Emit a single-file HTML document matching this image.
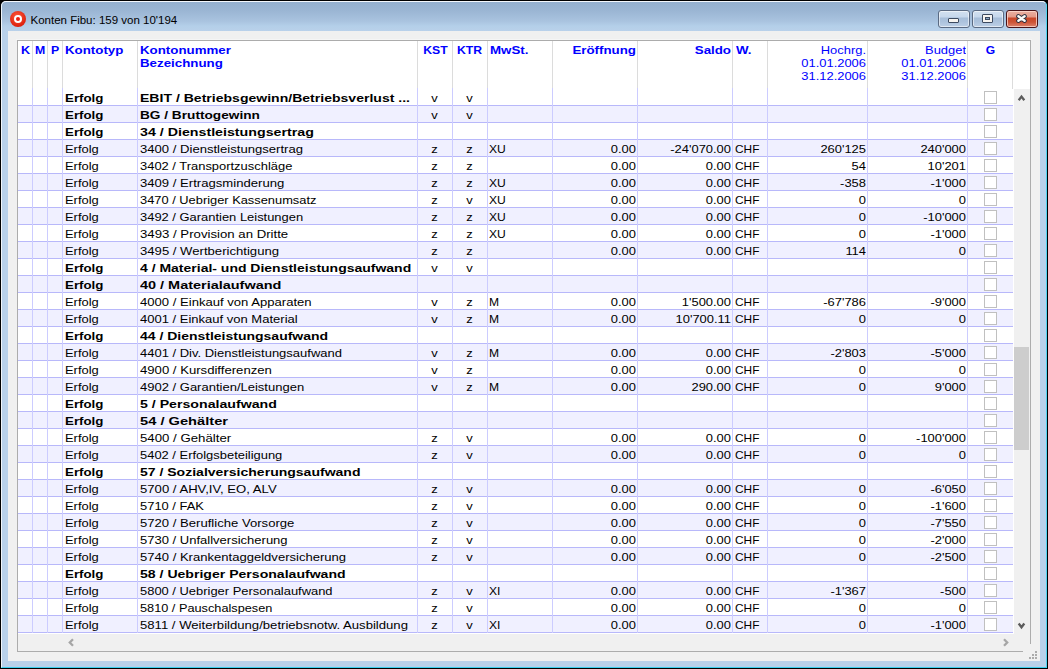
<!DOCTYPE html>
<html><head><meta charset="utf-8"><style>
*{margin:0;padding:0;box-sizing:border-box}
html,body{width:1048px;height:669px;overflow:hidden;background:#000}
body{position:relative;font-family:"Liberation Sans",sans-serif;font-size:11px;color:#000}
.abs{position:absolute}
#frame{position:absolute;left:0;top:0;width:1048px;height:669px;background:#000}
#fin{position:absolute;left:1px;top:1px;width:1046px;height:667px;border-radius:5px 5px 0 0;
 background:linear-gradient(#94b0cf 0px,#9bb6d4 10px,#a9c3df 20px,#b4cfe9 25px,#b9d1ea 30px,#b9d1ea 100%);}
#hl{position:absolute;left:1px;top:1px;width:1046px;height:667px;border-radius:5px 5px 0 0;border-top:1px solid #f4f8fc;border-left:1px solid #f0f5fa;border-right:1px solid #52d4f0;border-bottom:1px solid #3ccfee}
#client{position:absolute;left:8px;top:31px;width:1032px;height:630px;background:#f0f0f0}
.t{position:absolute;white-space:nowrap;line-height:13px;height:13px;transform:scaleX(1.175);transform-origin:0 0}
.b{font-weight:bold;transform:scaleX(1.21)}
.h{color:#0000ff}
.r{text-align:right;transform-origin:100% 0}
.c{text-align:center;transform-origin:50% 0}
.vl{position:absolute;width:1px}
.hl{position:absolute;height:1px}
.cb{position:absolute;width:13px;height:13px;border:1px solid #c0c0c0;background:#fff}
</style></head><body>
<div id="fin"></div><div id="hl"></div>
<div id="client"></div>

<svg class="abs" style="left:9px;top:10px" width="18" height="18" viewBox="0 0 18 18"><defs><radialGradient id="rg" cx="0.45" cy="0.35" r="0.7"><stop offset="0" stop-color="#ff5a3a"/><stop offset="1" stop-color="#d81808"/></radialGradient></defs><circle cx="9" cy="9" r="8" fill="url(#rg)"/><circle cx="9" cy="9" r="4" fill="#fff"/><circle cx="9" cy="9" r="2" fill="#e82010"/></svg>
<div class="abs" style="left:30.5px;top:13px;font-size:11.5px;line-height:14px;color:#000;white-space:nowrap;transform:scaleX(1.0);transform-origin:0 0">Konten Fibu: 159 von 10'194</div>
<div class="abs" style="left:938px;top:10px;width:32px;height:18px;border:1px solid #5a6a82;border-radius:3px;background:linear-gradient(#d2e0ef 0px,#c6d8ec 6px,#a7bed9 7px,#adc3dd 11px,#bdd0e6 16px);box-shadow:inset 0 0 0 1px rgba(255,255,255,0.55)"><div class="abs" style="left:9px;top:7px;width:11px;height:5px;background:#f6f4f0;border:1px solid #3c4a60;border-radius:1px"></div></div>
<div class="abs" style="left:972px;top:10px;width:32px;height:18px;border:1px solid #5a6a82;border-radius:3px;background:linear-gradient(#d2e0ef 0px,#c6d8ec 6px,#a7bed9 7px,#adc3dd 11px,#bdd0e6 16px);box-shadow:inset 0 0 0 1px rgba(255,255,255,0.55)"><div class="abs" style="left:9px;top:3px;width:11px;height:9px;background:#f6f4f0;border:1px solid #3c4a60;border-radius:1px"><div class="abs" style="left:2px;top:2px;width:5px;height:3px;background:#8aa6c4;border:1px solid #3c4a60"></div></div></div>
<div class="abs" style="left:1006px;top:10px;width:32px;height:18px;border:1px solid #4a1418;border-radius:3px;background:linear-gradient(#eab0a2 0px,#e49a88 6px,#c9482a 7px,#cc5234 11px,#dc8470 16px);box-shadow:inset 0 0 0 1px rgba(255,220,210,0.75)"><svg class="abs" style="left:8px;top:2px" width="13" height="11" viewBox="-1 -1 13 11"><path d="M2.4 2.3 L8.6 6.7 M8.6 2.3 L2.4 6.7" stroke="#2c3040" stroke-width="4.4" stroke-linecap="round"/><path d="M2.4 2.3 L8.6 6.7 M8.6 2.3 L2.4 6.7" stroke="#fbfaf6" stroke-width="2.5" stroke-linecap="round"/></svg></div>
<div class="abs" style="left:17px;top:40px;width:1014px;height:612px;border:1px solid #acacac;background:#f0f0f0"></div>
<div class="abs" style="left:16px;top:39px;width:1016px;height:1px;background:#f5f5f5"></div>
<div class="abs" style="left:18px;top:41px;width:1012px;height:48px;background:#fff"></div>
<div class="abs" style="left:18px;top:89px;width:995px;height:16px;background:#fff"></div>
<div class="hl" style="left:18px;top:105px;width:995px;background:#b8b8fa"></div>
<div class="abs" style="left:18px;top:106px;width:995px;height:16px;background:#f0f0ff"></div>
<div class="hl" style="left:18px;top:122px;width:995px;background:#b8b8fa"></div>
<div class="abs" style="left:18px;top:123px;width:995px;height:16px;background:#fff"></div>
<div class="hl" style="left:18px;top:139px;width:995px;background:#b8b8fa"></div>
<div class="abs" style="left:18px;top:140px;width:995px;height:16px;background:#f0f0ff"></div>
<div class="hl" style="left:18px;top:156px;width:995px;background:#b8b8fa"></div>
<div class="abs" style="left:18px;top:157px;width:995px;height:16px;background:#fff"></div>
<div class="hl" style="left:18px;top:173px;width:995px;background:#b8b8fa"></div>
<div class="abs" style="left:18px;top:174px;width:995px;height:16px;background:#f0f0ff"></div>
<div class="hl" style="left:18px;top:190px;width:995px;background:#b8b8fa"></div>
<div class="abs" style="left:18px;top:191px;width:995px;height:16px;background:#fff"></div>
<div class="hl" style="left:18px;top:207px;width:995px;background:#b8b8fa"></div>
<div class="abs" style="left:18px;top:208px;width:995px;height:16px;background:#f0f0ff"></div>
<div class="hl" style="left:18px;top:224px;width:995px;background:#b8b8fa"></div>
<div class="abs" style="left:18px;top:225px;width:995px;height:16px;background:#fff"></div>
<div class="hl" style="left:18px;top:241px;width:995px;background:#b8b8fa"></div>
<div class="abs" style="left:18px;top:242px;width:995px;height:16px;background:#f0f0ff"></div>
<div class="hl" style="left:18px;top:258px;width:995px;background:#b8b8fa"></div>
<div class="abs" style="left:18px;top:259px;width:995px;height:16px;background:#fff"></div>
<div class="hl" style="left:18px;top:275px;width:995px;background:#b8b8fa"></div>
<div class="abs" style="left:18px;top:276px;width:995px;height:16px;background:#f0f0ff"></div>
<div class="hl" style="left:18px;top:292px;width:995px;background:#b8b8fa"></div>
<div class="abs" style="left:18px;top:293px;width:995px;height:16px;background:#fff"></div>
<div class="hl" style="left:18px;top:309px;width:995px;background:#b8b8fa"></div>
<div class="abs" style="left:18px;top:310px;width:995px;height:16px;background:#f0f0ff"></div>
<div class="hl" style="left:18px;top:326px;width:995px;background:#b8b8fa"></div>
<div class="abs" style="left:18px;top:327px;width:995px;height:16px;background:#fff"></div>
<div class="hl" style="left:18px;top:343px;width:995px;background:#b8b8fa"></div>
<div class="abs" style="left:18px;top:344px;width:995px;height:16px;background:#f0f0ff"></div>
<div class="hl" style="left:18px;top:360px;width:995px;background:#b8b8fa"></div>
<div class="abs" style="left:18px;top:361px;width:995px;height:16px;background:#fff"></div>
<div class="hl" style="left:18px;top:377px;width:995px;background:#b8b8fa"></div>
<div class="abs" style="left:18px;top:378px;width:995px;height:16px;background:#f0f0ff"></div>
<div class="hl" style="left:18px;top:394px;width:995px;background:#b8b8fa"></div>
<div class="abs" style="left:18px;top:395px;width:995px;height:16px;background:#fff"></div>
<div class="hl" style="left:18px;top:411px;width:995px;background:#b8b8fa"></div>
<div class="abs" style="left:18px;top:412px;width:995px;height:16px;background:#f0f0ff"></div>
<div class="hl" style="left:18px;top:428px;width:995px;background:#b8b8fa"></div>
<div class="abs" style="left:18px;top:429px;width:995px;height:16px;background:#fff"></div>
<div class="hl" style="left:18px;top:445px;width:995px;background:#b8b8fa"></div>
<div class="abs" style="left:18px;top:446px;width:995px;height:16px;background:#f0f0ff"></div>
<div class="hl" style="left:18px;top:462px;width:995px;background:#b8b8fa"></div>
<div class="abs" style="left:18px;top:463px;width:995px;height:16px;background:#fff"></div>
<div class="hl" style="left:18px;top:479px;width:995px;background:#b8b8fa"></div>
<div class="abs" style="left:18px;top:480px;width:995px;height:16px;background:#f0f0ff"></div>
<div class="hl" style="left:18px;top:496px;width:995px;background:#b8b8fa"></div>
<div class="abs" style="left:18px;top:497px;width:995px;height:16px;background:#fff"></div>
<div class="hl" style="left:18px;top:513px;width:995px;background:#b8b8fa"></div>
<div class="abs" style="left:18px;top:514px;width:995px;height:16px;background:#f0f0ff"></div>
<div class="hl" style="left:18px;top:530px;width:995px;background:#b8b8fa"></div>
<div class="abs" style="left:18px;top:531px;width:995px;height:16px;background:#fff"></div>
<div class="hl" style="left:18px;top:547px;width:995px;background:#b8b8fa"></div>
<div class="abs" style="left:18px;top:548px;width:995px;height:16px;background:#f0f0ff"></div>
<div class="hl" style="left:18px;top:564px;width:995px;background:#b8b8fa"></div>
<div class="abs" style="left:18px;top:565px;width:995px;height:16px;background:#fff"></div>
<div class="hl" style="left:18px;top:581px;width:995px;background:#b8b8fa"></div>
<div class="abs" style="left:18px;top:582px;width:995px;height:16px;background:#f0f0ff"></div>
<div class="hl" style="left:18px;top:598px;width:995px;background:#b8b8fa"></div>
<div class="abs" style="left:18px;top:599px;width:995px;height:16px;background:#fff"></div>
<div class="hl" style="left:18px;top:615px;width:995px;background:#b8b8fa"></div>
<div class="abs" style="left:18px;top:616px;width:995px;height:16px;background:#f0f0ff"></div>
<div class="hl" style="left:18px;top:632px;width:995px;background:#b8b8fa"></div>
<div class="abs" style="left:18px;top:633px;width:996px;height:1px;background:#fff"></div>
<div class="abs" style="left:1013px;top:89px;width:1px;height:545px;background:#fff"></div>
<div class="vl" style="left:32px;top:41px;height:47px;background:#dcdcdc"></div>
<div class="vl" style="left:32px;top:88px;height:545px;background:#ccccff"></div>
<div class="vl" style="left:47px;top:41px;height:47px;background:#dcdcdc"></div>
<div class="vl" style="left:47px;top:88px;height:545px;background:#ccccff"></div>
<div class="vl" style="left:62px;top:41px;height:47px;background:#dcdcdc"></div>
<div class="vl" style="left:62px;top:88px;height:545px;background:#ccccff"></div>
<div class="vl" style="left:137px;top:41px;height:47px;background:#dcdcdc"></div>
<div class="vl" style="left:137px;top:88px;height:545px;background:#ccccff"></div>
<div class="vl" style="left:417px;top:41px;height:47px;background:#dcdcdc"></div>
<div class="vl" style="left:417px;top:88px;height:545px;background:#ccccff"></div>
<div class="vl" style="left:452px;top:41px;height:47px;background:#dcdcdc"></div>
<div class="vl" style="left:452px;top:88px;height:545px;background:#ccccff"></div>
<div class="vl" style="left:487px;top:41px;height:47px;background:#dcdcdc"></div>
<div class="vl" style="left:487px;top:88px;height:545px;background:#ccccff"></div>
<div class="vl" style="left:552px;top:41px;height:47px;background:#dcdcdc"></div>
<div class="vl" style="left:552px;top:88px;height:545px;background:#ccccff"></div>
<div class="vl" style="left:637px;top:41px;height:47px;background:#dcdcdc"></div>
<div class="vl" style="left:637px;top:88px;height:545px;background:#ccccff"></div>
<div class="vl" style="left:732px;top:41px;height:47px;background:#dcdcdc"></div>
<div class="vl" style="left:732px;top:88px;height:545px;background:#ccccff"></div>
<div class="vl" style="left:767px;top:41px;height:47px;background:#dcdcdc"></div>
<div class="vl" style="left:767px;top:88px;height:545px;background:#ccccff"></div>
<div class="vl" style="left:867px;top:41px;height:47px;background:#dcdcdc"></div>
<div class="vl" style="left:867px;top:88px;height:545px;background:#ccccff"></div>
<div class="vl" style="left:967px;top:41px;height:47px;background:#dcdcdc"></div>
<div class="vl" style="left:967px;top:88px;height:545px;background:#ccccff"></div>
<div class="vl" style="left:1012px;top:41px;height:48px;background:#dcdcdc"></div>
<div class="t b h" style="left:21px;top:44px;transform:scaleX(1.15)">K</div>
<div class="t b h" style="left:35px;top:44px;transform:scaleX(1.12)">M</div>
<div class="t b h" style="left:51px;top:44px;transform:scaleX(1.12)">P</div>
<div class="t b h" style="left:65px;top:44px;">Kontotyp</div>
<div class="t b h" style="left:140px;top:44px;">Kontonummer</div>
<div class="t b h" style="left:140px;top:57px;">Bezeichnung</div>
<div class="t b h c" style="left:418px;width:35px;top:44px;transform:scaleX(1.11);">KST</div>
<div class="t b h c" style="left:452px;width:35px;top:44px;transform:scaleX(1.11);">KTR</div>
<div class="t b h" style="left:490px;top:44px;">MwSt.</div>
<div class="t b h r" style="left:552px;width:84px;top:44px;">Eröffnung</div>
<div class="t b h r" style="left:637px;width:94px;top:44px;">Saldo</div>
<div class="t b h" style="left:736px;top:44px;">W.</div>
<div class="t h r" style="left:767px;width:99px;top:44px;">Hochrg.</div>
<div class="t h r" style="left:767px;width:99px;top:57px;">01.01.2006</div>
<div class="t h r" style="left:767px;width:99px;top:70px;">31.12.2006</div>
<div class="t h r" style="left:867px;width:99px;top:44px;">Budget</div>
<div class="t h r" style="left:867px;width:99px;top:57px;">01.01.2006</div>
<div class="t h r" style="left:867px;width:99px;top:70px;">31.12.2006</div>
<div class="t b h c" style="left:968px;width:45px;top:44px;transform:scaleX(1.1);">G</div>
<div class="t b" style="left:65px;top:92px;">Erfolg</div>
<div class="t b" style="left:140px;top:92px;transform:scaleX(1.2767);">EBIT / Betriebsgewinn/Betriebsverlust ...</div>
<div class="t  c" style="left:417px;width:35px;top:92px;">v</div>
<div class="t  c" style="left:452px;width:35px;top:92px;">v</div>
<div class="cb" style="left:984px;top:91px"></div>
<div class="t b" style="left:65px;top:109px;">Erfolg</div>
<div class="t b" style="left:140px;top:109px;transform:scaleX(1.2416);">BG / Bruttogewinn</div>
<div class="t  c" style="left:417px;width:35px;top:109px;">v</div>
<div class="t  c" style="left:452px;width:35px;top:109px;">v</div>
<div class="cb" style="left:984px;top:108px"></div>
<div class="t b" style="left:65px;top:126px;">Erfolg</div>
<div class="t b" style="left:140px;top:126px;transform:scaleX(1.2927);">34 / Dienstleistungsertrag</div>
<div class="cb" style="left:984px;top:125px"></div>
<div class="t " style="left:65px;top:143px;">Erfolg</div>
<div class="t " style="left:140px;top:143px;transform:scaleX(1.1898);">3400 / Dienstleistungsertrag</div>
<div class="t  c" style="left:417px;width:35px;top:143px;">z</div>
<div class="t  c" style="left:452px;width:35px;top:143px;">z</div>
<div class="t " style="left:489px;top:143px;transform:scaleX(1.1);">XU</div>
<div class="t  r" style="left:552px;width:84px;top:143px;">0.00</div>
<div class="t  r" style="left:637px;width:94px;top:143px;">-24'070.00</div>
<div class="t " style="left:735px;top:143px;transform:scaleX(1.08);">CHF</div>
<div class="t  r" style="left:767px;width:99px;top:143px;">260'125</div>
<div class="t  r" style="left:867px;width:99px;top:143px;">240'000</div>
<div class="cb" style="left:984px;top:142px"></div>
<div class="t " style="left:65px;top:160px;">Erfolg</div>
<div class="t " style="left:140px;top:160px;transform:scaleX(1.1750);">3402 / Transportzuschläge</div>
<div class="t  c" style="left:417px;width:35px;top:160px;">z</div>
<div class="t  c" style="left:452px;width:35px;top:160px;">z</div>
<div class="t  r" style="left:552px;width:84px;top:160px;">0.00</div>
<div class="t  r" style="left:637px;width:94px;top:160px;">0.00</div>
<div class="t " style="left:735px;top:160px;transform:scaleX(1.08);">CHF</div>
<div class="t  r" style="left:767px;width:99px;top:160px;">54</div>
<div class="t  r" style="left:867px;width:99px;top:160px;">10'201</div>
<div class="cb" style="left:984px;top:159px"></div>
<div class="t " style="left:65px;top:177px;">Erfolg</div>
<div class="t " style="left:140px;top:177px;transform:scaleX(1.1918);">3409 / Ertragsminderung</div>
<div class="t  c" style="left:417px;width:35px;top:177px;">z</div>
<div class="t  c" style="left:452px;width:35px;top:177px;">z</div>
<div class="t " style="left:489px;top:177px;transform:scaleX(1.1);">XU</div>
<div class="t  r" style="left:552px;width:84px;top:177px;">0.00</div>
<div class="t  r" style="left:637px;width:94px;top:177px;">0.00</div>
<div class="t " style="left:735px;top:177px;transform:scaleX(1.08);">CHF</div>
<div class="t  r" style="left:767px;width:99px;top:177px;">-358</div>
<div class="t  r" style="left:867px;width:99px;top:177px;">-1'000</div>
<div class="cb" style="left:984px;top:176px"></div>
<div class="t " style="left:65px;top:194px;">Erfolg</div>
<div class="t " style="left:140px;top:194px;transform:scaleX(1.1683);">3470 / Uebriger Kassenumsatz</div>
<div class="t  c" style="left:417px;width:35px;top:194px;">z</div>
<div class="t  c" style="left:452px;width:35px;top:194px;">v</div>
<div class="t " style="left:489px;top:194px;transform:scaleX(1.1);">XU</div>
<div class="t  r" style="left:552px;width:84px;top:194px;">0.00</div>
<div class="t  r" style="left:637px;width:94px;top:194px;">0.00</div>
<div class="t " style="left:735px;top:194px;transform:scaleX(1.08);">CHF</div>
<div class="t  r" style="left:767px;width:99px;top:194px;">0</div>
<div class="t  r" style="left:867px;width:99px;top:194px;">0</div>
<div class="cb" style="left:984px;top:193px"></div>
<div class="t " style="left:65px;top:211px;">Erfolg</div>
<div class="t " style="left:140px;top:211px;transform:scaleX(1.1750);">3492 / Garantien Leistungen</div>
<div class="t  c" style="left:417px;width:35px;top:211px;">z</div>
<div class="t  c" style="left:452px;width:35px;top:211px;">z</div>
<div class="t " style="left:489px;top:211px;transform:scaleX(1.1);">XU</div>
<div class="t  r" style="left:552px;width:84px;top:211px;">0.00</div>
<div class="t  r" style="left:637px;width:94px;top:211px;">0.00</div>
<div class="t " style="left:735px;top:211px;transform:scaleX(1.08);">CHF</div>
<div class="t  r" style="left:767px;width:99px;top:211px;">0</div>
<div class="t  r" style="left:867px;width:99px;top:211px;">-10'000</div>
<div class="cb" style="left:984px;top:210px"></div>
<div class="t " style="left:65px;top:228px;">Erfolg</div>
<div class="t " style="left:140px;top:228px;transform:scaleX(1.1997);">3493 / Provision an Dritte</div>
<div class="t  c" style="left:417px;width:35px;top:228px;">z</div>
<div class="t  c" style="left:452px;width:35px;top:228px;">z</div>
<div class="t " style="left:489px;top:228px;transform:scaleX(1.1);">XU</div>
<div class="t  r" style="left:552px;width:84px;top:228px;">0.00</div>
<div class="t  r" style="left:637px;width:94px;top:228px;">0.00</div>
<div class="t " style="left:735px;top:228px;transform:scaleX(1.08);">CHF</div>
<div class="t  r" style="left:767px;width:99px;top:228px;">0</div>
<div class="t  r" style="left:867px;width:99px;top:228px;">-1'000</div>
<div class="cb" style="left:984px;top:227px"></div>
<div class="t " style="left:65px;top:245px;">Erfolg</div>
<div class="t " style="left:140px;top:245px;transform:scaleX(1.1924);">3495 / Wertberichtigung</div>
<div class="t  c" style="left:417px;width:35px;top:245px;">z</div>
<div class="t  c" style="left:452px;width:35px;top:245px;">z</div>
<div class="t  r" style="left:552px;width:84px;top:245px;">0.00</div>
<div class="t  r" style="left:637px;width:94px;top:245px;">0.00</div>
<div class="t " style="left:735px;top:245px;transform:scaleX(1.08);">CHF</div>
<div class="t  r" style="left:767px;width:99px;top:245px;">114</div>
<div class="t  r" style="left:867px;width:99px;top:245px;">0</div>
<div class="cb" style="left:984px;top:244px"></div>
<div class="t b" style="left:65px;top:262px;">Erfolg</div>
<div class="t b" style="left:140px;top:262px;transform:scaleX(1.2714);">4 / Material- und Dienstleistungsaufwand</div>
<div class="t  c" style="left:417px;width:35px;top:262px;">v</div>
<div class="t  c" style="left:452px;width:35px;top:262px;">v</div>
<div class="cb" style="left:984px;top:261px"></div>
<div class="t b" style="left:65px;top:279px;">Erfolg</div>
<div class="t b" style="left:140px;top:279px;transform:scaleX(1.3140);">40 / Materialaufwand</div>
<div class="cb" style="left:984px;top:278px"></div>
<div class="t " style="left:65px;top:296px;">Erfolg</div>
<div class="t " style="left:140px;top:296px;transform:scaleX(1.1890);">4000 / Einkauf von Apparaten</div>
<div class="t  c" style="left:417px;width:35px;top:296px;">v</div>
<div class="t  c" style="left:452px;width:35px;top:296px;">z</div>
<div class="t " style="left:489px;top:296px;transform:scaleX(1.1);">M</div>
<div class="t  r" style="left:552px;width:84px;top:296px;">0.00</div>
<div class="t  r" style="left:637px;width:94px;top:296px;">1'500.00</div>
<div class="t " style="left:735px;top:296px;transform:scaleX(1.08);">CHF</div>
<div class="t  r" style="left:767px;width:99px;top:296px;">-67'786</div>
<div class="t  r" style="left:867px;width:99px;top:296px;">-9'000</div>
<div class="cb" style="left:984px;top:295px"></div>
<div class="t " style="left:65px;top:313px;">Erfolg</div>
<div class="t " style="left:140px;top:313px;transform:scaleX(1.1826);">4001 / Einkauf von Material</div>
<div class="t  c" style="left:417px;width:35px;top:313px;">v</div>
<div class="t  c" style="left:452px;width:35px;top:313px;">z</div>
<div class="t " style="left:489px;top:313px;transform:scaleX(1.1);">M</div>
<div class="t  r" style="left:552px;width:84px;top:313px;">0.00</div>
<div class="t  r" style="left:637px;width:94px;top:313px;">10'700.11</div>
<div class="t " style="left:735px;top:313px;transform:scaleX(1.08);">CHF</div>
<div class="t  r" style="left:767px;width:99px;top:313px;">0</div>
<div class="t  r" style="left:867px;width:99px;top:313px;">0</div>
<div class="cb" style="left:984px;top:312px"></div>
<div class="t b" style="left:65px;top:330px;">Erfolg</div>
<div class="t b" style="left:140px;top:330px;transform:scaleX(1.2715);">44 / Dienstleistungsaufwand</div>
<div class="cb" style="left:984px;top:329px"></div>
<div class="t " style="left:65px;top:347px;">Erfolg</div>
<div class="t " style="left:140px;top:347px;transform:scaleX(1.1809);">4401 / Div. Dienstleistungsaufwand</div>
<div class="t  c" style="left:417px;width:35px;top:347px;">v</div>
<div class="t  c" style="left:452px;width:35px;top:347px;">z</div>
<div class="t " style="left:489px;top:347px;transform:scaleX(1.1);">M</div>
<div class="t  r" style="left:552px;width:84px;top:347px;">0.00</div>
<div class="t  r" style="left:637px;width:94px;top:347px;">0.00</div>
<div class="t " style="left:735px;top:347px;transform:scaleX(1.08);">CHF</div>
<div class="t  r" style="left:767px;width:99px;top:347px;">-2'803</div>
<div class="t  r" style="left:867px;width:99px;top:347px;">-5'000</div>
<div class="cb" style="left:984px;top:346px"></div>
<div class="t " style="left:65px;top:364px;">Erfolg</div>
<div class="t " style="left:140px;top:364px;transform:scaleX(1.1934);">4900 / Kursdifferenzen</div>
<div class="t  c" style="left:417px;width:35px;top:364px;">v</div>
<div class="t  c" style="left:452px;width:35px;top:364px;">z</div>
<div class="t  r" style="left:552px;width:84px;top:364px;">0.00</div>
<div class="t  r" style="left:637px;width:94px;top:364px;">0.00</div>
<div class="t " style="left:735px;top:364px;transform:scaleX(1.08);">CHF</div>
<div class="t  r" style="left:767px;width:99px;top:364px;">0</div>
<div class="t  r" style="left:867px;width:99px;top:364px;">0</div>
<div class="cb" style="left:984px;top:363px"></div>
<div class="t " style="left:65px;top:381px;">Erfolg</div>
<div class="t " style="left:140px;top:381px;transform:scaleX(1.1823);">4902 / Garantien/Leistungen</div>
<div class="t  c" style="left:417px;width:35px;top:381px;">v</div>
<div class="t  c" style="left:452px;width:35px;top:381px;">z</div>
<div class="t " style="left:489px;top:381px;transform:scaleX(1.1);">M</div>
<div class="t  r" style="left:552px;width:84px;top:381px;">0.00</div>
<div class="t  r" style="left:637px;width:94px;top:381px;">290.00</div>
<div class="t " style="left:735px;top:381px;transform:scaleX(1.08);">CHF</div>
<div class="t  r" style="left:767px;width:99px;top:381px;">0</div>
<div class="t  r" style="left:867px;width:99px;top:381px;">9'000</div>
<div class="cb" style="left:984px;top:380px"></div>
<div class="t b" style="left:65px;top:398px;">Erfolg</div>
<div class="t b" style="left:140px;top:398px;transform:scaleX(1.2862);">5 / Personalaufwand</div>
<div class="cb" style="left:984px;top:397px"></div>
<div class="t b" style="left:65px;top:415px;">Erfolg</div>
<div class="t b" style="left:140px;top:415px;transform:scaleX(1.3325);">54 / Gehälter</div>
<div class="cb" style="left:984px;top:414px"></div>
<div class="t " style="left:65px;top:432px;">Erfolg</div>
<div class="t " style="left:140px;top:432px;transform:scaleX(1.2022);">5400 / Gehälter</div>
<div class="t  c" style="left:417px;width:35px;top:432px;">z</div>
<div class="t  c" style="left:452px;width:35px;top:432px;">v</div>
<div class="t  r" style="left:552px;width:84px;top:432px;">0.00</div>
<div class="t  r" style="left:637px;width:94px;top:432px;">0.00</div>
<div class="t " style="left:735px;top:432px;transform:scaleX(1.08);">CHF</div>
<div class="t  r" style="left:767px;width:99px;top:432px;">0</div>
<div class="t  r" style="left:867px;width:99px;top:432px;">-100'000</div>
<div class="cb" style="left:984px;top:431px"></div>
<div class="t " style="left:65px;top:449px;">Erfolg</div>
<div class="t " style="left:140px;top:449px;transform:scaleX(1.1750);">5402 / Erfolgsbeteiligung</div>
<div class="t  c" style="left:417px;width:35px;top:449px;">z</div>
<div class="t  c" style="left:452px;width:35px;top:449px;">v</div>
<div class="t  r" style="left:552px;width:84px;top:449px;">0.00</div>
<div class="t  r" style="left:637px;width:94px;top:449px;">0.00</div>
<div class="t " style="left:735px;top:449px;transform:scaleX(1.08);">CHF</div>
<div class="t  r" style="left:767px;width:99px;top:449px;">0</div>
<div class="t  r" style="left:867px;width:99px;top:449px;">0</div>
<div class="cb" style="left:984px;top:448px"></div>
<div class="t b" style="left:65px;top:466px;">Erfolg</div>
<div class="t b" style="left:140px;top:466px;transform:scaleX(1.2743);">57 / Sozialversicherungsaufwand</div>
<div class="cb" style="left:984px;top:465px"></div>
<div class="t " style="left:65px;top:483px;">Erfolg</div>
<div class="t " style="left:140px;top:483px;transform:scaleX(1.1927);">5700 / AHV,IV, EO, ALV</div>
<div class="t  c" style="left:417px;width:35px;top:483px;">z</div>
<div class="t  c" style="left:452px;width:35px;top:483px;">v</div>
<div class="t  r" style="left:552px;width:84px;top:483px;">0.00</div>
<div class="t  r" style="left:637px;width:94px;top:483px;">0.00</div>
<div class="t " style="left:735px;top:483px;transform:scaleX(1.08);">CHF</div>
<div class="t  r" style="left:767px;width:99px;top:483px;">0</div>
<div class="t  r" style="left:867px;width:99px;top:483px;">-6'050</div>
<div class="cb" style="left:984px;top:482px"></div>
<div class="t " style="left:65px;top:500px;">Erfolg</div>
<div class="t " style="left:140px;top:500px;transform:scaleX(1.1750);">5710 / FAK</div>
<div class="t  c" style="left:417px;width:35px;top:500px;">z</div>
<div class="t  c" style="left:452px;width:35px;top:500px;">v</div>
<div class="t  r" style="left:552px;width:84px;top:500px;">0.00</div>
<div class="t  r" style="left:637px;width:94px;top:500px;">0.00</div>
<div class="t " style="left:735px;top:500px;transform:scaleX(1.08);">CHF</div>
<div class="t  r" style="left:767px;width:99px;top:500px;">0</div>
<div class="t  r" style="left:867px;width:99px;top:500px;">-1'600</div>
<div class="cb" style="left:984px;top:499px"></div>
<div class="t " style="left:65px;top:517px;">Erfolg</div>
<div class="t " style="left:140px;top:517px;transform:scaleX(1.1906);">5720 / Berufliche Vorsorge</div>
<div class="t  c" style="left:417px;width:35px;top:517px;">z</div>
<div class="t  c" style="left:452px;width:35px;top:517px;">v</div>
<div class="t  r" style="left:552px;width:84px;top:517px;">0.00</div>
<div class="t  r" style="left:637px;width:94px;top:517px;">0.00</div>
<div class="t " style="left:735px;top:517px;transform:scaleX(1.08);">CHF</div>
<div class="t  r" style="left:767px;width:99px;top:517px;">0</div>
<div class="t  r" style="left:867px;width:99px;top:517px;">-7'550</div>
<div class="cb" style="left:984px;top:516px"></div>
<div class="t " style="left:65px;top:534px;">Erfolg</div>
<div class="t " style="left:140px;top:534px;transform:scaleX(1.1832);">5730 / Unfallversicherung</div>
<div class="t  c" style="left:417px;width:35px;top:534px;">z</div>
<div class="t  c" style="left:452px;width:35px;top:534px;">v</div>
<div class="t  r" style="left:552px;width:84px;top:534px;">0.00</div>
<div class="t  r" style="left:637px;width:94px;top:534px;">0.00</div>
<div class="t " style="left:735px;top:534px;transform:scaleX(1.08);">CHF</div>
<div class="t  r" style="left:767px;width:99px;top:534px;">0</div>
<div class="t  r" style="left:867px;width:99px;top:534px;">-2'000</div>
<div class="cb" style="left:984px;top:533px"></div>
<div class="t " style="left:65px;top:551px;">Erfolg</div>
<div class="t " style="left:140px;top:551px;transform:scaleX(1.1866);">5740 / Krankentaggeldversicherung</div>
<div class="t  c" style="left:417px;width:35px;top:551px;">z</div>
<div class="t  c" style="left:452px;width:35px;top:551px;">v</div>
<div class="t  r" style="left:552px;width:84px;top:551px;">0.00</div>
<div class="t  r" style="left:637px;width:94px;top:551px;">0.00</div>
<div class="t " style="left:735px;top:551px;transform:scaleX(1.08);">CHF</div>
<div class="t  r" style="left:767px;width:99px;top:551px;">0</div>
<div class="t  r" style="left:867px;width:99px;top:551px;">-2'500</div>
<div class="cb" style="left:984px;top:550px"></div>
<div class="t b" style="left:65px;top:568px;">Erfolg</div>
<div class="t b" style="left:140px;top:568px;transform:scaleX(1.2790);">58 / Uebriger Personalaufwand</div>
<div class="cb" style="left:984px;top:567px"></div>
<div class="t " style="left:65px;top:585px;">Erfolg</div>
<div class="t " style="left:140px;top:585px;transform:scaleX(1.1750);">5800 / Uebriger Personalaufwand</div>
<div class="t  c" style="left:417px;width:35px;top:585px;">z</div>
<div class="t  c" style="left:452px;width:35px;top:585px;">v</div>
<div class="t " style="left:489px;top:585px;transform:scaleX(1.1);">XI</div>
<div class="t  r" style="left:552px;width:84px;top:585px;">0.00</div>
<div class="t  r" style="left:637px;width:94px;top:585px;">0.00</div>
<div class="t " style="left:735px;top:585px;transform:scaleX(1.08);">CHF</div>
<div class="t  r" style="left:767px;width:99px;top:585px;">-1'367</div>
<div class="t  r" style="left:867px;width:99px;top:585px;">-500</div>
<div class="cb" style="left:984px;top:584px"></div>
<div class="t " style="left:65px;top:602px;">Erfolg</div>
<div class="t " style="left:140px;top:602px;transform:scaleX(1.1572);">5810 / Pauschalspesen</div>
<div class="t  c" style="left:417px;width:35px;top:602px;">z</div>
<div class="t  c" style="left:452px;width:35px;top:602px;">v</div>
<div class="t  r" style="left:552px;width:84px;top:602px;">0.00</div>
<div class="t  r" style="left:637px;width:94px;top:602px;">0.00</div>
<div class="t " style="left:735px;top:602px;transform:scaleX(1.08);">CHF</div>
<div class="t  r" style="left:767px;width:99px;top:602px;">0</div>
<div class="t  r" style="left:867px;width:99px;top:602px;">0</div>
<div class="cb" style="left:984px;top:601px"></div>
<div class="t " style="left:65px;top:619px;">Erfolg</div>
<div class="t " style="left:140px;top:619px;transform:scaleX(1.1929);">5811 / Weiterbildung/betriebsnotw. Ausbildung</div>
<div class="t  c" style="left:417px;width:35px;top:619px;">z</div>
<div class="t  c" style="left:452px;width:35px;top:619px;">v</div>
<div class="t " style="left:489px;top:619px;transform:scaleX(1.1);">XI</div>
<div class="t  r" style="left:552px;width:84px;top:619px;">0.00</div>
<div class="t  r" style="left:637px;width:94px;top:619px;">0.00</div>
<div class="t " style="left:735px;top:619px;transform:scaleX(1.08);">CHF</div>
<div class="t  r" style="left:767px;width:99px;top:619px;">0</div>
<div class="t  r" style="left:867px;width:99px;top:619px;">-1'000</div>
<div class="cb" style="left:984px;top:618px"></div>
<div class="abs" style="left:1014px;top:89px;width:16px;height:562px;background:#f0f0f0"></div>
<div class="abs" style="left:1014px;top:347px;width:15px;height:103px;background:#cdcdcd"></div>
<svg class="abs" style="left:1014px;top:89px" width="16" height="17"><path d="M4.7 11.2 L7.5 7.6 L10.3 11.2" fill="none" stroke="#5c5c5c" stroke-width="2.3"/></svg>
<svg class="abs" style="left:1014px;top:617px" width="16" height="17"><path d="M4.7 6.5 L7.5 10.3 L10.3 6.5" fill="none" stroke="#5c5c5c" stroke-width="2.3"/></svg>
<svg class="abs" style="left:62px;top:634px" width="17" height="17"><path d="M11 5.3 L7.8 8.5 L11 11.7" fill="none" stroke="#a6a6a6" stroke-width="2.3"/></svg>
<svg class="abs" style="left:997px;top:634px" width="17" height="17"><path d="M7 5.3 L10.2 8.5 L7 11.7" fill="none" stroke="#a6a6a6" stroke-width="2.3"/></svg>
<div class="abs" style="left:1023px;top:644px;width:16px;height:16px;background:#f0f0f0"></div>
<div class="abs" style="left:1035px;top:651px;width:2px;height:2px;background:#ababab"></div>
<div class="abs" style="left:1032px;top:654px;width:2px;height:2px;background:#ababab"></div>
<div class="abs" style="left:1035px;top:654px;width:2px;height:2px;background:#ababab"></div>
<div class="abs" style="left:1029px;top:657px;width:2px;height:2px;background:#ababab"></div>
<div class="abs" style="left:1032px;top:657px;width:2px;height:2px;background:#ababab"></div>
<div class="abs" style="left:1035px;top:657px;width:2px;height:2px;background:#ababab"></div>
</body></html>
